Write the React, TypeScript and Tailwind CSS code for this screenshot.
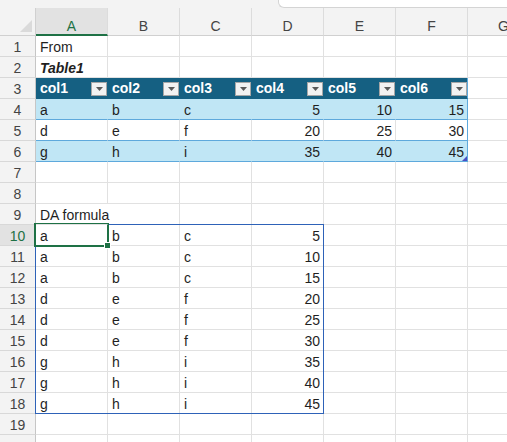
import { type FC } from 'react';

type Kind = 'plain' | 'thead' | 'band' | 'tbody';

interface Row {
  kind: Kind;
  cells: string[];
}

const COLS = ['A', 'B', 'C', 'D', 'E', 'F', 'G'];

const rows: Row[] = [
  { kind: 'plain', cells: ['From'] },
  { kind: 'plain', cells: ['Table1'] },
  { kind: 'thead', cells: ['col1', 'col2', 'col3', 'col4', 'col5', 'col6'] },
  { kind: 'band', cells: ['a', 'b', 'c', '5', '10', '15'] },
  { kind: 'tbody', cells: ['d', 'e', 'f', '20', '25', '30'] },
  { kind: 'band', cells: ['g', 'h', 'i', '35', '40', '45'] },
  { kind: 'plain', cells: [] },
  { kind: 'plain', cells: [] },
  { kind: 'plain', cells: ['DA formula'] },
  { kind: 'plain', cells: ['a', 'b', 'c', '5'] },
  { kind: 'plain', cells: ['a', 'b', 'c', '10'] },
  { kind: 'plain', cells: ['a', 'b', 'c', '15'] },
  { kind: 'plain', cells: ['d', 'e', 'f', '20'] },
  { kind: 'plain', cells: ['d', 'e', 'f', '25'] },
  { kind: 'plain', cells: ['d', 'e', 'f', '30'] },
  { kind: 'plain', cells: ['g', 'h', 'i', '35'] },
  { kind: 'plain', cells: ['g', 'h', 'i', '40'] },
  { kind: 'plain', cells: ['g', 'h', 'i', '45'] },
  { kind: 'plain', cells: [] },
  { kind: 'plain', cells: [] },
];

const isNum = (v: string) => /^\d+$/.test(v);

const FilterButton: FC = () => (
  <span className="ml-auto mt-[1px] flex h-[14px] w-[16px] shrink-0 items-center justify-center border border-[#a6a6a6] bg-[#f2f2f2]">
    <svg width="7" height="4" viewBox="0 0 7 4">
      <path d="M0 0h7L3.5 4z" fill="#5a5a5a" />
    </svg>
  </span>
);

function cellTone(kind: Kind, ci: number, ri: number) {
  const inTable = ci < 6;
  if (kind === 'thead' && inTable) {
    return ci === 5
      ? 'bg-[#156082] border-r-[#5ea9dc] border-b-[#156082] text-white font-bold'
      : 'bg-[#156082] border-r-[#156082] border-b-[#156082] text-white font-bold';
  }
  if (kind === 'band' && inTable) {
    return ci === 5
      ? 'bg-[#c0e6f5] border-r-[#5ea9dc] border-b-[#5ea9dc]'
      : 'bg-[#c0e6f5] border-r-[#c0e6f5] border-b-[#5ea9dc]';
  }
  if (kind === 'tbody' && inTable) {
    return ci === 5 ? 'border-r-[#5ea9dc] border-b-[#5ea9dc]' : 'border-r-[#e1e1e1] border-b-[#5ea9dc]';
  }
  // overflowing label in A9 hides the gridline to its right
  if (ri === 8 && ci === 0) return 'border-r-transparent border-b-[#e1e1e1] z-10';
  return 'border-[#e1e1e1]';
}

const App: FC = () => {
  return (
    <div className="relative h-[442px] w-[507px] overflow-hidden bg-white font-['Liberation_Sans',Arial,sans-serif] text-[14px] text-[#1f1f1f]">
      {/* strip under the formula bar */}
      <div className="flex h-[8px] bg-[#f3f3f3]">
        <div className="w-[278px] shrink-0" />
        <div className="flex-1 rounded-bl-[6px] border-b border-l border-[#d4d4d4] bg-white" />
      </div>

      {/* column headers */}
      <div className="flex h-[28px] bg-[#f3f3f3] text-[#444]">
        <div className="relative w-[36px] shrink-0 border-b border-r border-[#d0d0d0]">
          <svg className="absolute bottom-[3px] right-[3px]" width="12" height="12" viewBox="0 0 12 12">
            <path d="M12 0v12H0z" fill="#dadada" />
          </svg>
        </div>
        {COLS.map((c) =>
          c === 'A' ? (
            <div
              key={c}
              className="w-[72px] shrink-0 border-b-2 border-r border-b-[#1e7145] border-r-[#dcdcdc] bg-[#e2e2e2] pt-[8px] text-center leading-[20px] text-[#1e7145]"
            >
              {c}
            </div>
          ) : (
            <div
              key={c}
              className="w-[72px] shrink-0 border-b border-r border-b-[#d0d0d0] border-r-[#dcdcdc] pt-[8px] text-center leading-[20px]"
            >
              {c}
            </div>
          ),
        )}
      </div>

      {/* sheet body */}
      {rows.map((row, ri) => (
        <div key={ri} className="flex h-[21px]">
          <div
            className={
              ri === 9
                ? 'w-[36px] shrink-0 border-b border-r border-b-[#d8d8d8] border-r-[#c6c6c6] bg-[#e2e2e2] pt-[1px] text-center leading-[20px] text-[#1e7145]'
                : 'w-[36px] shrink-0 border-b border-r border-b-[#d8d8d8] border-r-[#c6c6c6] bg-[#f3f3f3] pt-[1px] text-center leading-[20px] text-[#444]'
            }
          >
            {ri < 19 ? ri + 1 : ''}
          </div>
          {COLS.map((_, ci) => {
            const v = row.cells[ci] ?? '';
            const tone = cellTone(row.kind, ci, ri);
            if (row.kind === 'thead' && ci < 6) {
              return (
                <div key={ci} className={`flex w-[72px] shrink-0 items-center border-b border-r pl-[4px] ${tone}`}>
                  <span className="leading-[20px]">{v}</span>
                  <FilterButton />
                </div>
              );
            }
            return (
              <div
                key={ci}
                className={`relative w-[72px] shrink-0 whitespace-nowrap border-b border-r pt-[1px] leading-[20px] ${
                  isNum(v) ? 'pr-[3px] text-right' : 'pl-[4px]'
                } ${tone} ${ri === 1 && ci === 0 ? 'font-bold italic' : ''}`}
              >
                {v}
              </div>
            );
          })}
        </div>
      ))}

      {/* table resize grip */}
      <svg className="absolute left-[462px] top-[156px]" width="5" height="5" viewBox="0 0 5 5">
        <path d="M5 0v5H0z" fill="#4a4fc4" />
      </svg>

      {/* spill range border */}
      <div className="pointer-events-none absolute left-[35px] top-[224px] h-[190px] w-[289px] border border-[#2e62b8]" />

      {/* active cell */}
      <div className="pointer-events-none absolute left-[34px] top-[223px] h-[24px] w-[75px] border-2 border-[#1e7145]" />
      <div className="absolute left-[104px] top-[242px] h-[7px] w-[7px] border border-white bg-[#1e7145]" />
    </div>
  );
};

export default App;
